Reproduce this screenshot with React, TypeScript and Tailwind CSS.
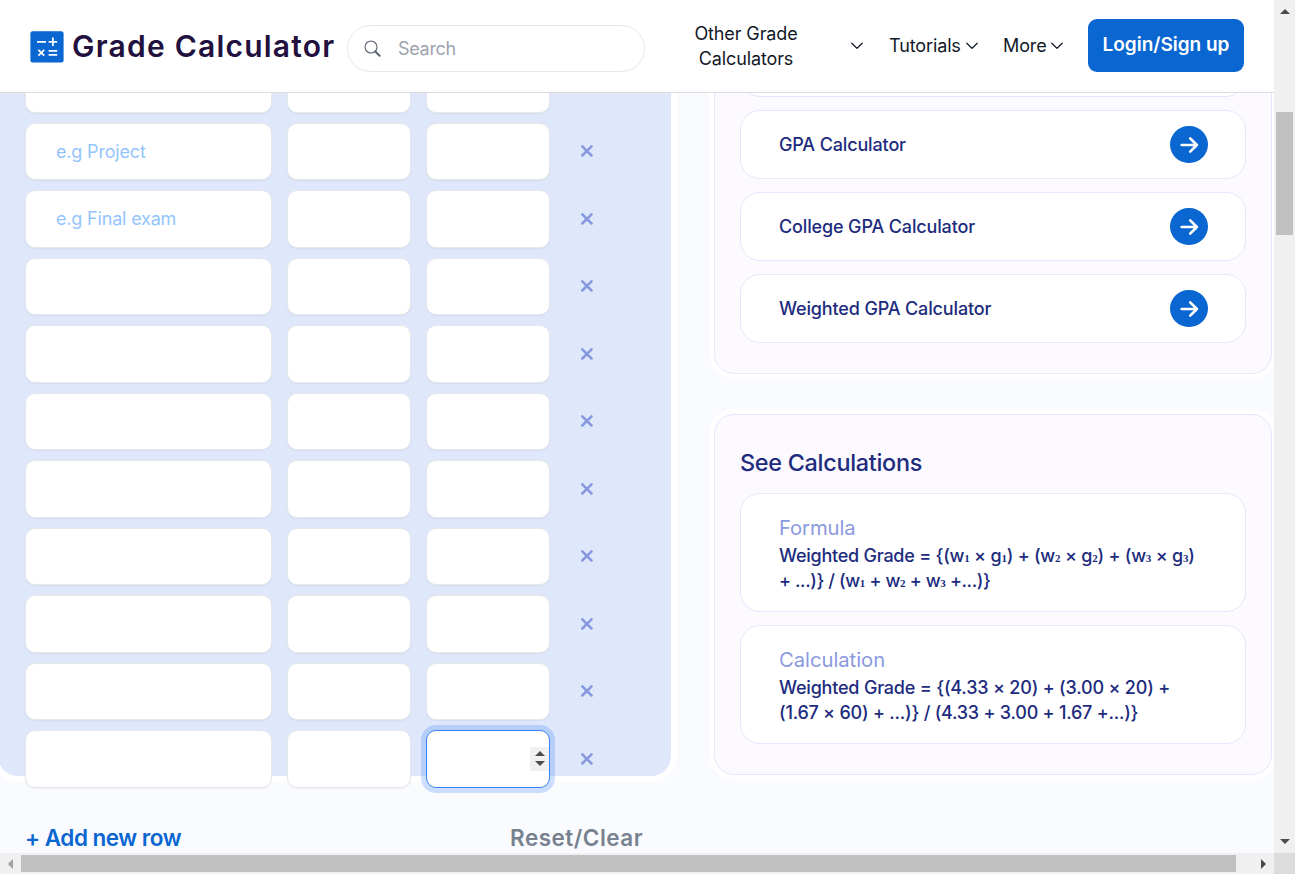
import React from "react";

const rows = ["", "e.g Project", "e.g Final exam", "", "", "", "", "", "", "", ""];
const links = ["", "GPA Calculator", "College GPA Calculator", "Weighted GPA Calculator"];

const inputBox = "h-[57.5px] rounded-[10px] border border-[#e5e7eb] bg-white shadow-[0_1px_2px_rgba(0,0,0,0.05)]";

function Logo() {
  return (
    <svg className="mt-[31px] ml-[30px] h-8 w-[34px] shrink-0" viewBox="0 0 34 32" fill="none">
      <rect x="0.4" y="0.2" width="33.2" height="31.2" rx="2.2" fill="#0a66d0" />
      <path
        d="M7 10.8h9M18.6 10.8h8.6M22.9 6.5v8.6M8.4 18.9l5.8 5.8M14.2 18.9l-5.8 5.8M18.6 19.9h8.6M18.6 23.9h8.6"
        stroke="white"
        strokeWidth="1.7"
      />
    </svg>
  );
}

function Chevron({ className = "" }: { className?: string }) {
  return (
    <svg className={`h-[14px] w-[14px] shrink-0 ${className}`} viewBox="0 0 14 14" fill="none">
      <path d="M1.8 4.2 7 9.4l5.2-5.2" stroke="#111827" strokeWidth="1.3" strokeLinecap="round" strokeLinejoin="round" />
    </svg>
  );
}

function Sub({ n }: { n: number }) {
  return <span className="inline-block w-[5.3px] font-['Liberation_Serif',serif] text-[11px] leading-none font-bold">{n}</span>;
}

function Header() {
  return (
    <header className="flex h-[93px] w-[1274px] shrink-0 items-start border-b border-[#dcdde0] bg-white">
      <Logo />
      <div className="mt-[28px] ml-[8px] w-[275px] text-[30px] leading-[36px] font-semibold tracking-[1.22px] whitespace-nowrap text-[#22103f]">
        Grade Calculator
      </div>
      <div className="mt-[25px] flex h-[47px] w-[298px] shrink-0 items-center rounded-full border border-[#e5e7eb] pl-[16px]">
        <svg className="h-[17px] w-[17px]" viewBox="0 0 17 17" fill="none">
          <circle cx="7" cy="7" r="6" stroke="#5b6472" strokeWidth="1.1" />
          <path d="m11.4 11.5 4.2 4.2" stroke="#5b6472" strokeWidth="2" strokeLinecap="round" />
        </svg>
        <span className="ml-[17px] text-[18px] tracking-[-0.3px] text-[#9ca3af]">Search</span>
      </div>
      <nav className="flex h-[92px] items-center pl-[49px] text-[18px] leading-[25px] tracking-[-0.12px] text-[#111827]">
        <div className="w-[104px] text-center whitespace-nowrap">
          Other Grade
          <br />
          Calculators
        </div>
        <Chevron className="ml-[52px]" />
        <span className="mb-px ml-[25px] w-[76px]">Tutorials</span>
        <Chevron />
        <span className="mb-px ml-[24px] w-[47px]">More</span>
        <Chevron />
      </nav>
      <button className="mt-[19px] ml-[24px] h-[53px] w-[156px] rounded-[9px] bg-[#0a66d0] text-[19px] font-semibold tracking-[-0.02px] whitespace-nowrap text-white">
        Login/Sign up
      </button>
    </header>
  );
}

function GradeTable() {
  return (
    <section className="w-[714px] shrink-0">
      <div className="mt-[-38px] ml-[-2px] flex h-[721px] w-[673px] flex-col gap-[10px] rounded-[20px] bg-[#dfe7fb] pl-[27px] shadow-[0_0_0_6px_#fff]">
        {rows.map((label, i) => {
          const focused = i === rows.length - 1;
          return (
            <div key={i} className="flex shrink-0 items-center">
              <div className={`${inputBox} flex w-[247px] items-center pt-[0.4px] pl-[30px] text-[18px] tracking-[-0.18px] text-[#93c5fd]`}>{label}</div>
              <div className={`${inputBox} ml-[15px] w-[124px]`} />
              {focused ? (
                <div className="ml-[15px] flex h-[57.5px] w-[124px] items-center justify-end rounded-[10px] border border-[#3b82f6] bg-white shadow-[0_0_0_5px_rgba(59,130,246,0.25)]">
                  <div className="flex h-6 w-[19px] items-center justify-center bg-[#f0f0f0]">
                    <svg className="h-[15px] w-[10px]" viewBox="0 0 10 15" fill="#4b4b4b">
                      <path d="M0 5 5 0l5 5zM0 10h10l-5 5z" />
                    </svg>
                  </div>
                </div>
              ) : (
                <div className={`${inputBox} ml-[15px] w-[124px]`} />
              )}
              <svg className="mb-[0.2px] ml-[31px] h-[12px] w-[12px]" viewBox="0 0 12 12" fill="none">
                <path d="m1.3 1.3 9.2 9.2M10.5 1.3l-9.2 9.2" stroke="#8798df" strokeWidth="2.5" strokeLinecap="round" />
              </svg>
            </div>
          );
        })}
      </div>
      <div className="mt-[44px] flex h-9 items-center pl-[25px] text-[22.5px] font-semibold whitespace-nowrap">
        <span className="w-[485px] tracking-[-0.5px] text-[#0a66d0]">+ Add new row</span>
        <span className="tracking-[0.5px] text-[#78828f]">Reset/Clear</span>
      </div>
    </section>
  );
}

const card = "w-[558px] rounded-[20px] border border-[#e4e7fd] bg-[#fcfaff] px-[25px] shadow-[0_0_0_5px_#fff]";
const cardItem = "rounded-[20px] border border-[#e4e7fd] bg-white";

function Sidebar() {
  return (
    <aside className="w-[560px] shrink-0 text-[#202b7e]">
      <div className={`${card} mt-[-98px] flex h-[379px] flex-col justify-end gap-[13px] pb-[30px]`}>
        {links.map((label) => (
          <a key={label} className={`${cardItem} flex h-[69px] shrink-0 items-center justify-between pr-[37px] pl-[38px] text-[18px] font-medium tracking-[-0.14px]`}>
            {label}
            <span className="ml-auto flex h-[37px] w-[38px] items-center justify-center rounded-full bg-[#0a66d0]">
              <svg className="h-[18px] w-[19px]" viewBox="0 0 19 18" fill="none">
                <path d="M1.7 9h15.2M10.2 2.4 16.9 9l-6.7 6.6" stroke="white" strokeWidth="2.7" strokeLinecap="round" strokeLinejoin="round" />
              </svg>
            </span>
          </a>
        ))}
      </div>
      <div className={`${card} mt-[40px] h-[361px]`}>
        <h2 className="pt-[32px] text-[23.4px] leading-[32px] font-medium tracking-[-0.28px]">See Calculations</h2>
        <div className={`${cardItem} mt-[14px] h-[119px] pt-[20px] pl-[38px] whitespace-nowrap`}>
          <div className="text-[20.25px] leading-[27px] tracking-[-0.1px] text-[#8b9ae0]">Formula</div>
          <div className="pt-[2px] text-[18px] leading-[25px] font-medium tracking-[-0.24px]">
            <div>Weighted Grade = {"{(w"}<Sub n={1} /> × g<Sub n={1} />) + (w<Sub n={2} /> × g<Sub n={2} />) + (w<Sub n={3} /> × g<Sub n={3} />)</div>
            <div className="tracking-[-0.4px]">+ ...){"}"} / (w<Sub n={1} /> + w<Sub n={2} /> + w<Sub n={3} /> +...){"}"}</div>
          </div>
        </div>
        <div className={`${cardItem} mt-[13px] h-[119px] pt-[20px] pl-[38px] whitespace-nowrap`}>
          <div className="text-[20.25px] leading-[27px] tracking-[-0.04px] text-[#8b9ae0]">Calculation</div>
          <div className="pt-[2px] text-[18px] leading-[25px] font-medium tracking-[-0.2px]">
            <div>Weighted Grade = {"{"}(4.33 × 20) + (3.00 × 20) +</div>
            <div className="tracking-[-0.23px]">(1.67 × 60) + ...){"}"} / (4.33 + 3.00 + 1.67 +...){"}"}</div>
          </div>
        </div>
      </div>
    </aside>
  );
}

export default function App() {
  return (
    <div className="flex h-[874px] w-[1295px] flex-col overflow-hidden bg-[#fafbff] font-['Inter','Liberation_Sans',sans-serif]">
      <div className="flex h-[853px] shrink-0">
        <div className="flex w-[1274px] shrink-0 flex-col overflow-hidden">
          <Header />
          <main className="flex h-[760px] shrink-0 items-start overflow-hidden">
            <GradeTable />
            <Sidebar />
          </main>
        </div>
        <div className="flex w-[21px] flex-col items-center justify-between bg-[#f0f0f0] pt-[9px] pb-[9px]">
          <svg className="h-[5px] w-[10px]" viewBox="0 0 10 5" fill="#4b4b4b"><path d="M0 5 5 0l5 5z" /></svg>
          <div className="mt-[98px] mr-[1px] mb-auto h-[123px] w-[17px] bg-[#c0c0c0]" />
          <svg className="h-[5px] w-[10px]" viewBox="0 0 10 5" fill="#4b4b4b"><path d="M0 0h10L5 5z" /></svg>
        </div>
      </div>
      <div className="flex h-[21px] shrink-0">
        <div className="flex w-[1274px] items-center bg-[#f0f0f0] pl-2">
          <svg className="h-[10px] w-[5px]" viewBox="0 0 5 10" fill="#a0a0a0"><path d="M5 0v10L0 5z" /></svg>
          <div className="mb-[1px] ml-2 h-[17px] w-[1215px] bg-[#c0c0c0]" />
          <svg className="ml-[25px] h-[10px] w-[5px]" viewBox="0 0 5 10" fill="#4b4b4b"><path d="M0 0v10l5-5z" /></svg>
        </div>
        <div className="w-[21px] bg-[#dcdcdc]" />
      </div>
    </div>
  );
}
